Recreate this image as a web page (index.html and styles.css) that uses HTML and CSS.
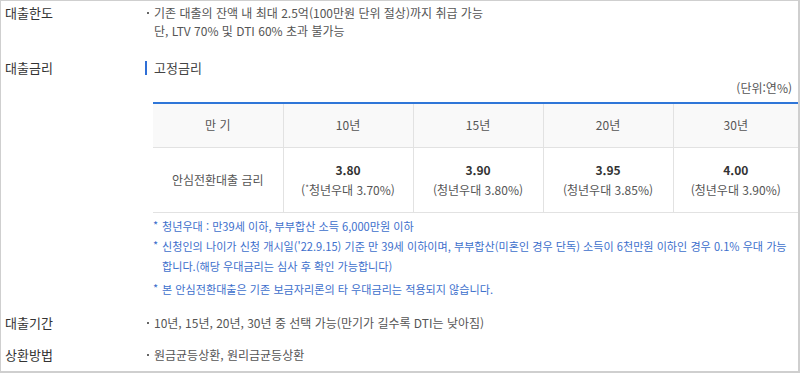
FILE: index.html
```html
<!DOCTYPE html>
<html lang="ko">
<head>
<meta charset="utf-8">
<link rel="stylesheet" href="styles.css">
</head>
<body>
<div class="frame">
  <div class="row r1">
    <div class="label">대출한도</div>
    <div class="content">
      <p class="dot">기존 대출의 잔액 내 최대 2.5억(100만원 단위 절상)까지 취급 가능<br>단, LTV 70% 및 DTI 60% 초과 불가능</p>
    </div>
  </div>
  <div class="row r2">
    <div class="label">대출금리</div>
    <div class="content">
      <h3 class="sub">고정금리</h3>
      <div class="unit">(단위:연%)</div>
      <table class="rate">
        <colgroup>
          <col class="c1"><col class="cn"><col class="cn"><col class="cn"><col>
        </colgroup>
        <thead>
          <tr><th>만 기</th><th>10년</th><th>15년</th><th>20년</th><th>30년</th></tr>
        </thead>
        <tbody>
          <tr>
            <td>안심전환대출 금리</td>
            <td><b>3.80</b><br>(<sup>*</sup>청년우대 3.70%)</td>
            <td><b>3.90</b><br>(청년우대 3.80%)</td>
            <td><b>3.95</b><br>(청년우대 3.85%)</td>
            <td><b>4.00</b><br>(청년우대 3.90%)</td>
          </tr>
        </tbody>
      </table>
      <ul class="notes">
        <li>청년우대 : 만39세 이하, 부부합산 소득 6,000만원 이하</li>
        <li>신청인의 나이가 신청 개시일('22.9.15) 기준 만 39세 이하이며, 부부합산(미혼인 경우 단독) 소득이 6천만원 이하인 경우 0.1% 우대 가능합니다.(해당 우대금리는 심사 후 확인 가능합니다)</li>
        <li class="last">본 안심전환대출은 기존 보금자리론의 타 우대금리는 적용되지 않습니다.</li>
      </ul>
    </div>
  </div>
  <div class="row r3">
    <div class="label">대출기간</div>
    <div class="content"><p class="dot">10년, 15년, 20년, 30년 중 선택 가능(만기가 길수록 DTI는 낮아짐)</p></div>
  </div>
  <div class="row r4">
    <div class="label">상환방법</div>
    <div class="content"><p class="dot">원금균등상환, 원리금균등상환</p></div>
  </div>
</div>
</body>
</html>
```

FILE: styles.css
```css
* { box-sizing: border-box; }
html, body { margin: 0; padding: 0; background: #fff; }
body {
  font-family: "Noto Sans CJK KR", "Noto Sans", sans-serif;
  color: #555;
}
.frame {
  width: 800px;
  height: 373px;
  border: 1px solid #cfcfcf;
  border-right-width: 2px;
  border-bottom-width: 2px;
  padding: 3px 0 0 4px;
  overflow: hidden;
}
.row {
  display: grid;
  grid-template-columns: 140px 1fr;
}
.r2 { margin-top: 19px; }
.r3 { margin-top: 15px; }
.r4 { margin-top: 14px; }
.label {
  font-size: 13px;
  line-height: 18px;
  color: #333;
}
.content { font-size: 12px; line-height: 18px; }
.dot {
  margin: 0;
  padding-left: 9px;
  position: relative;
}
.dot::before {
  content: "";
  position: absolute;
  left: 2px;
  top: 8px;
  width: 2px;
  height: 2px;
  background: #666;
}
.sub {
  margin: 0;
  font-size: 13px;
  font-weight: normal;
  line-height: 18px;
  color: #444;
  padding-left: 7px;
  border-left: 2px solid #2f6fd6;
  height: 18px;
  display: flex;
  align-items: center;
  border-image: linear-gradient(to bottom, transparent 3px, #2f6fd6 3px, #2f6fd6 15px, transparent 15px) 1;
}
.unit {
  margin-top: 2px;
  text-align: right;
  padding-right: 6px;
  line-height: 18px;
  color: #555;
}
.rate {
  margin-top: 5px;
  margin-left: 8px;
  width: 645px;
  border-collapse: collapse;
  border-top: 2px solid #2f76d8;
  table-layout: fixed;
}
.rate col.c1, .rate col.cn { width: 130px; }
.rate th, .rate td {
  border: 1px solid #e2e2e2;
  text-align: center;
  font-weight: normal;
  color: #555;
  font-size: 12px;
  padding: 0;
}
.rate th:first-child, .rate td:first-child { border-left: none; }
.rate th:last-child, .rate td:last-child { border-right: none; }
.rate thead th {
  background: #f9f9f9;
  height: 44px;
  border-top: none;
}
.rate tbody td {
  height: 65px;
  line-height: 20px;
}
.rate b { color: #333; font-weight: bold; font-size: 12px; }
.rate sup { font-size: 8px; vertical-align: 4px; line-height: 0; }
.notes {
  list-style: none;
  margin: 3px 0 0 8px;
  padding: 0;
  color: #3d6fcc;
  font-size: 11.1px;
  line-height: 20px;
}
.notes li {
  padding-left: 9px;
  position: relative;
  padding-right: 10px;
}
.notes li::before {
  content: "*";
  position: absolute;
  left: 0;
  top: -1px;
}
.notes li.last { margin-top: 3px; }
```
